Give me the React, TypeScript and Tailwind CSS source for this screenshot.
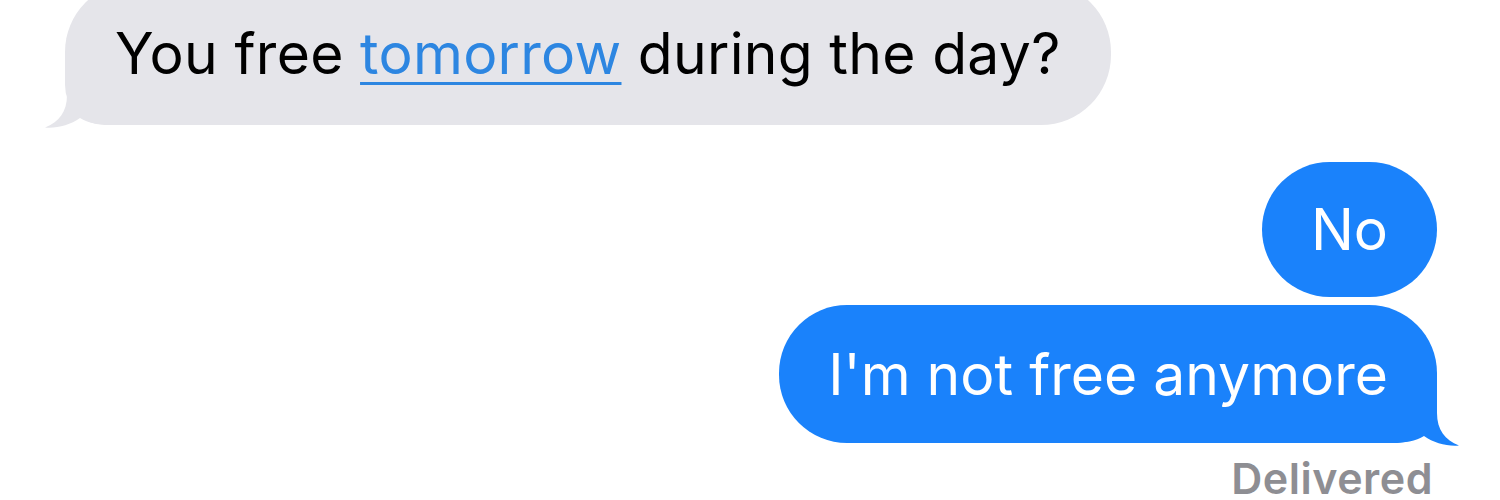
import React from "react";

// iMessage-style tail; drawn pointing to the bottom-right, mirrored for incoming bubbles.
function Tail({ color, side }: { color: string; side: "left" | "right" }) {
  const pos =
    side === "right"
      ? "absolute right-[-22px] bottom-[-3px]"
      : "absolute left-[-20px] bottom-[-3px] -scale-x-100";
  return (
    <svg className={pos} width="70" height="63" viewBox="0 0 70 63" aria-hidden="true">
      <path
        d="M0 0 H48 V30 C48 47 56 57 70 62.5 C58 63.5 45 60 35 53 C27 58 16 60 0 60 Z"
        fill={color}
      />
    </svg>
  );
}

export default function App() {
  return (
    <div className="w-[1500px] h-[500px] overflow-hidden bg-white font-['Inter','Liberation_Sans',sans-serif] antialiased">
      <div className="flex flex-col">
        {/* incoming */}
        <div className="flex pl-[65px] mt-[-18px]">
          <div className="relative flex items-center h-[143px] rounded-[70px] rounded-bl-[40px] bg-[#e5e5ea] px-[50px] text-[57px] leading-none text-black tracking-[0.3px]">
            <span className="relative z-10 whitespace-nowrap">
              You free{" "}
              <span className="text-[#2d86e1] underline decoration-[3px] underline-offset-[8px]">tomorrow</span>{" "}
              during the day?
            </span>
            <Tail color="#e5e5ea" side="left" />
          </div>
        </div>

        {/* outgoing */}
        <div className="flex flex-col items-end pr-[63px] mt-[37px] gap-[8px]">
          <div className="flex items-center h-[135px] rounded-full bg-[#1a82fb] px-[49px] text-[57px] leading-none text-white tracking-[0px]">
            No
          </div>
          <div className="relative flex items-center h-[138px] rounded-[68px] rounded-br-[40px] bg-[#1a82fb] px-[49px] text-[57px] leading-none text-white tracking-[0px]">
            <span className="relative z-10 whitespace-nowrap">I'm not free anymore</span>
            <Tail color="#1a82fb" side="right" />
          </div>
        </div>

        <div className="flex justify-end pr-[67px] mt-[14px]">
          <span className="text-[43px] leading-none font-semibold text-[#8e8e93] tracking-[0.5px]">Delivered</span>
        </div>
      </div>
    </div>
  );
}
